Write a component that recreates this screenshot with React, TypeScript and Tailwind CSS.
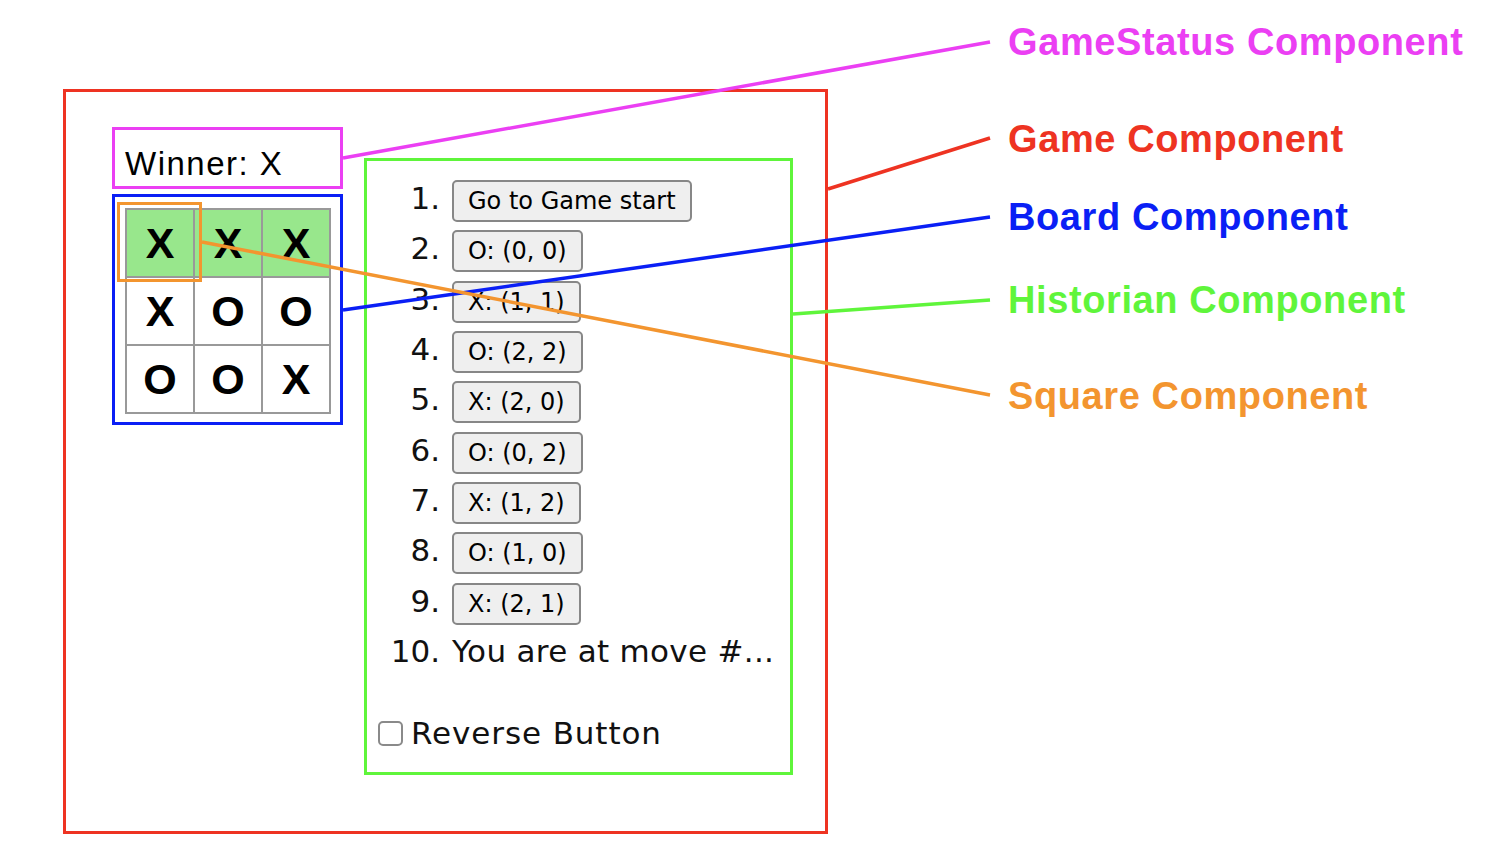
import React from 'react';

const board: string[] = ['X', 'X', 'X', 'X', 'O', 'O', 'O', 'O', 'X'];
const winLine = [0, 1, 2];

const moves: string[] = [
  'Go to Game start',
  'O: (0, 0)',
  'X: (1, 1)',
  'O: (2, 2)',
  'X: (2, 0)',
  'O: (0, 2)',
  'X: (1, 2)',
  'O: (1, 0)',
  'X: (2, 1)',
];

const Square: React.FC<{ value: string; highlight: boolean }> = ({ value, highlight }) => (
  <div
    className={`flex items-center justify-center w-[66px] h-[66px] font-['Liberation_Sans',Arial,sans-serif] font-bold text-[43px] leading-none text-black ${
      highlight ? 'bg-[#98e78c]' : 'bg-white'
    }`}
  >
    {value}
  </div>
);

const Board: React.FC = () => (
  <div className="relative w-[231px] h-[231px] border-[3px] border-[#0a1ff5] pl-[10px] pt-[11px]">
    <div className="grid grid-cols-[repeat(3,66px)] gap-[2px] p-[2px] bg-[#999999] w-fit">
      {board.map((v, i) => (
        <Square key={i} value={v} highlight={winLine.includes(i)} />
      ))}
    </div>
    {/* Square Component outline */}
    <div className="absolute left-[2px] top-[5px] w-[85px] h-[80px] border-[3px] border-[#f3952f]" />
  </div>
);

const GameStatus: React.FC = () => (
  <div className="w-[231px] h-[62px] border-[3px] border-[#eb3ff3] pl-[10px] pt-[17px]">
    <div className="font-['Liberation_Sans',Arial,sans-serif] text-[33px] leading-[33px] tracking-[1.5px] text-black">
      Winner: X
    </div>
  </div>
);

const Historian: React.FC = () => (
  <div className="w-[429px] h-[617px] mt-[31px] border-[3px] border-[#5ff53b] pt-[19px] font-['DejaVu_Sans',sans-serif] text-[#111]">
    <div className="flex flex-col">
      {moves.map((m, i) => (
        <div key={i} className="flex items-baseline h-[50.33px] gap-[12px]">
          <span className="w-[73px] text-right text-[31px] leading-[36px]">{i + 1}.</span>
          <button className="h-[42px] px-[14px] bg-[#efefef] border-2 border-[#878787] rounded-[5px] text-[24px] leading-[28px] text-black">
            {m}
          </button>
        </div>
      ))}
      <div className="flex items-baseline h-[50.33px] gap-[12px]">
        <span className="w-[73px] text-right text-[31px] leading-[36px]">10.</span>
        <span className="text-[31px] leading-[36px] tracking-[0.3px]">You are at move #...</span>
      </div>
    </div>
    <div className="flex items-center mt-[32px] ml-[11px] gap-[8px] h-[36px]">
      <div className="w-[25px] h-[25px] border-2 border-[#8a8a8a] rounded-[5px] bg-white" />
      <span className="text-[31px] leading-[36px] tracking-[0.9px]">Reverse Button</span>
    </div>
  </div>
);

const Game: React.FC = () => (
  <div className="w-[765px] h-[745px] mt-[89px] ml-[63px] border-[3px] border-[#ee3322] pl-[46px] pt-[35px] flex items-start gap-[21px]">
    <div className="flex flex-col gap-[5px]">
      <GameStatus />
      <Board />
    </div>
    <Historian />
  </div>
);

const labelCls = "h-[40px] leading-[40px] font-['Liberation_Sans',Arial,sans-serif] font-bold text-[38px] tracking-[0.6px] whitespace-nowrap";

const App: React.FC = () => {
  return (
    <div className="relative w-[1504px] h-[854px] bg-white overflow-hidden flex items-start">
      <Game />

      {/* Labels */}
      <div className="ml-[180px] pt-[22px] flex flex-col">
        <div className={`${labelCls} text-[#eb3ff3]`}>GameStatus Component</div>
        <div className={`${labelCls} text-[#ee3322] mt-[57px]`}>Game Component</div>
        <div className={`${labelCls} text-[#0a1ff5] mt-[38px]`}>Board Component</div>
        <div className={`${labelCls} text-[#5ff53b] mt-[43px]`}>Historian Component</div>
        <div className={`${labelCls} text-[#f3952f] mt-[56px]`}>Square Component</div>
      </div>

      {/* Leader lines */}
      <svg className="absolute inset-0 pointer-events-none" width="1504" height="854" viewBox="0 0 1504 854">
        <line x1="343" y1="158" x2="990" y2="42" stroke="#eb3ff3" strokeWidth="3.5" />
        <line x1="828" y1="189" x2="990" y2="138" stroke="#ee3322" strokeWidth="3.5" />
        <line x1="343" y1="310" x2="990" y2="217" stroke="#0a1ff5" strokeWidth="3.5" />
        <line x1="793" y1="314" x2="990" y2="300" stroke="#5ff53b" strokeWidth="3.5" />
        <line x1="202" y1="242" x2="990" y2="395" stroke="#f3952f" strokeWidth="3.5" />
      </svg>
    </div>
  );
};

export default App;
